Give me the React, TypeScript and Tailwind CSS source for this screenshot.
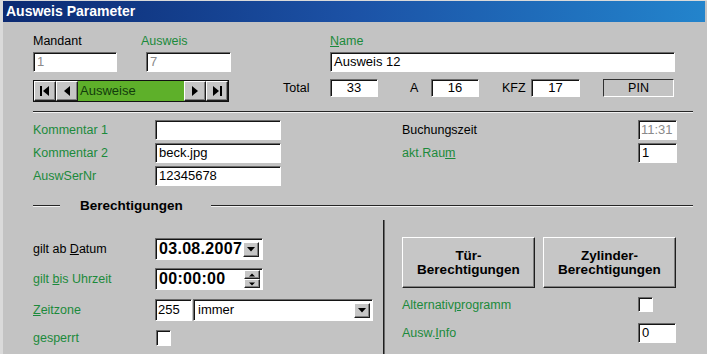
import React from "react";

type BoxProps = { className?: string; children?: React.ReactNode };

// sunken field, classic windows look
const Field = ({ className = "", children }: BoxProps) => (
  <div
    className={`flex items-center border border-t-[#6a6a6a] border-l-[#6a6a6a] border-b-white border-r-white shadow-[inset_1px_1px_0_#141414] ${className}`}
  >
    {children}
  </div>
);

const Raised = ({ className = "", children }: BoxProps) => (
  <div
    className={`flex items-center justify-center border border-t-white border-l-white border-b-[#1e1e1e] border-r-[#1e1e1e] shadow-[inset_-1px_-1px_0_#808080] bg-[#c6c6c6] ${className}`}
  >
    {children}
  </div>
);

const Label = ({ className = "", children }: BoxProps) => (
  <div className={`text-[12.5px] leading-[14px] ${className}`}>{children}</div>
);

const Green = "text-[#1b8a3b]";

const NavIcon = ({ kind }: { kind: "first" | "prev" | "next" | "last" }) => (
  <svg width="12" height="12" viewBox="0 0 12 12">
    {kind === "first" && (
      <>
        <rect x="1" y="1" width="2" height="10" fill="#000" />
        <polygon points="10,1 10,11 4,6" fill="#000" />
      </>
    )}
    {kind === "prev" && <polygon points="9,1 9,11 3,6" fill="#000" />}
    {kind === "next" && <polygon points="3,1 3,11 9,6" fill="#000" />}
    {kind === "last" && (
      <>
        <polygon points="2,1 2,11 8,6" fill="#000" />
        <rect x="9" y="1" width="2" height="10" fill="#000" />
      </>
    )}
  </svg>
);

const DownArrow = () => (
  <svg width="8" height="5" viewBox="0 0 8 5">
    <polygon points="0,0 8,0 4,4.5" fill="#000" />
  </svg>
);

const DropButton = ({ className = "" }: { className?: string }) => (
  <Raised className={`w-[16px] h-[15px] ${className}`}>
    <DownArrow />
  </Raised>
);

const Separator = ({ className = "" }: { className?: string }) => (
  <div className={`h-0 border-t border-t-[#262626] border-b border-b-[#f2f2f2] ${className}`} />
);

const App = () => {
  return (
    <div className="w-[707px] h-[354px] overflow-hidden bg-[#c3c3c3] border-l-[3px] border-l-[#dadada] border-t border-t-[#dadada] font-['Liberation_Sans',Arial,sans-serif] text-black">
      {/* title bar */}
      <div className="h-[21px] mr-[2px] bg-gradient-to-r from-[#0c2a72] via-[#1c52a6] to-[#2384cc] pl-[3px] text-white font-bold text-[14px] leading-[21px]">
        Ausweis Parameter
      </div>

      <div className="pl-[30px]">
        {/* kopf */}
        <div className="flex mt-[12px]">
          <Label className="w-[108px]">Mandant</Label>
          <Label className={`w-[189px] ${Green}`}>Ausweis</Label>
          <Label className={Green}>
            <u>N</u>ame
          </Label>
        </div>
        <div className="flex mt-[4px] h-[20px]">
          <Field className="w-[84px] bg-white pl-[3px] text-[13px] text-[#8a8a8a]">1</Field>
          <Field className="w-[85px] ml-[29px] bg-white pl-[3px] text-[13px] text-[#8a8a8a]">7</Field>
          <Field className="w-[345px] ml-[99px] bg-white pl-[3px] text-[13px]">Ausweis 12</Field>
        </div>

        <div className="flex items-start mt-[7px]">
          <div className="mt-[1px] w-[196px] h-[22px] flex border border-[#111] bg-[#111]">
            <Raised className="w-[22px] h-full">
              <NavIcon kind="first" />
            </Raised>
            <Raised className="w-[22px] h-full">
              <NavIcon kind="prev" />
            </Raised>
            <div className="flex-1 bg-[#5eb02a] text-[#123c0c] text-[13px] leading-[20px] pl-[2px]">Ausweise</div>
            <Raised className="w-[22px] h-full">
              <NavIcon kind="next" />
            </Raised>
            <Raised className="w-[22px] h-full">
              <NavIcon kind="last" />
            </Raised>
          </div>
          <Label className="ml-[54px] w-[47px] leading-[18px]">Total</Label>
          <Field className="w-[48px] h-[18px] bg-white justify-center text-[13px]">33</Field>
          <Label className="ml-[32px] w-[21px] leading-[18px]">A</Label>
          <Field className="w-[48px] h-[18px] bg-white justify-center text-[13px]">16</Field>
          <Label className="ml-[23px] w-[29px] leading-[18px]">KFZ</Label>
          <Field className="w-[49px] h-[18px] bg-white justify-center text-[13px]">17</Field>
          <Field className="w-[71px] h-[18px] ml-[23px] bg-[#c3c3c3] justify-center text-[12.5px] shadow-none border-t-[#303030] border-l-[#303030]">
            PIN
          </Field>
        </div>

        <Separator className="mt-[9px] w-[660px]" />

        {/* kommentare */}
        <div className="flex flex-col gap-[3px] mt-[7px]">
          <div className="flex items-center h-[20px]">
            <Label className={`w-[122px] ${Green}`}>Kommentar 1</Label>
            <Field className="w-[126px] h-full bg-white" />
            <Label className="ml-[121px] w-[236px]">Buchungszeit</Label>
            <Field className="w-[39px] h-full bg-white pl-[2px] text-[13px] text-[#8a8a8a]">11:31</Field>
          </div>
          <div className="flex items-center h-[20px]">
            <Label className={`w-[122px] ${Green}`}>Kommentar 2</Label>
            <Field className="w-[126px] h-full bg-white pl-[3px] text-[13px]">beck.jpg</Field>
            <Label className={`ml-[121px] w-[236px] ${Green}`}>
              akt.Rau<u>m</u>
            </Label>
            <Field className="w-[39px] h-full bg-white pl-[3px] text-[13px]">1</Field>
          </div>
          <div className="flex items-center h-[20px]">
            <Label className={`w-[122px] ${Green}`}>AuswSerNr</Label>
            <Field className="w-[126px] h-full bg-white pl-[3px] text-[13px]">12345678</Field>
          </div>
        </div>

        {/* berechtigungen */}
        <div className="flex items-center mt-[12px] h-[16px] w-[660px]">
          <Separator className="w-[27px]" />
          <div className="ml-[20px] font-bold text-[13.5px]">Berechtigungen</div>
          <Separator className="ml-[28px] flex-1" />
        </div>
      </div>

      <div className="flex mt-[6px] h-[140px]">
        <div className="w-[380px] pl-[30px] pt-[18px]">
          <div className="flex items-center h-[22px]">
            <Label className="w-[122px]">
              gilt ab <u>D</u>atum
            </Label>
            <Field className="w-[108px] h-full bg-white pl-[3px] pr-[3px] justify-between">
              <span className="font-bold text-[16px] tracking-[0.3px]">03.08.2007</span>
              <DropButton />
            </Field>
          </div>
          <div className="flex items-center h-[22px] mt-[8px]">
            <Label className={`w-[122px] ${Green}`}>
              gilt <u>b</u>is Uhrzeit
            </Label>
            <Field className="w-[108px] h-full bg-white pl-[3px] pr-[2px] justify-between">
              <span className="font-bold text-[16px] tracking-[0.3px]">00:00:00</span>
              <div className="flex flex-col">
                <Raised className="w-[16px] h-[9px]">
                  <svg width="6" height="4" viewBox="0 0 6 4">
                    <polygon points="0,3.5 6,3.5 3,0.5" fill="#000" />
                  </svg>
                </Raised>
                <Raised className="w-[16px] h-[9px]">
                  <svg width="6" height="4" viewBox="0 0 6 4">
                    <polygon points="0,0.5 6,0.5 3,3.5" fill="#000" />
                  </svg>
                </Raised>
              </div>
            </Field>
          </div>
          <div className="flex items-center h-[22px] mt-[9px]">
            <Label className={`w-[122px] ${Green}`}>
              <u>Z</u>eitzone
            </Label>
            <Field className="w-[37px] h-full bg-white pl-[2px] text-[13px]">255</Field>
            <Field className="w-[180px] ml-[1px] h-full bg-white pl-[4px] pr-[2px] justify-between text-[13px]">
              <span>immer</span>
              <DropButton />
            </Field>
          </div>
          <div className="flex items-center h-[16px] mt-[9px]">
            <Label className={`w-[123px] ${Green}`}>gesperrt</Label>
            <Field className="w-[15px] h-[16px] bg-white" />
          </div>
        </div>

        <div className="w-[2px] border-l border-l-[#1e1e1e] border-r border-r-[#6a6a6a]" />

        <div className="pl-[17px] pt-[17px]">
          <div className="flex gap-[8px]">
            <Raised className="w-[133px] h-[51px] flex-col font-bold text-[13.5px] leading-[14px] pt-[1px]">
              <span>Tür-</span>
              <span>Berechtigungen</span>
            </Raised>
            <Raised className="w-[133px] h-[51px] flex-col font-bold text-[13.5px] leading-[14px] pt-[1px]">
              <span>Zylinder-</span>
              <span>Berechtigungen</span>
            </Raised>
          </div>
          <div className="flex items-center h-[15px] mt-[9px]">
            <Label className={`w-[236px] ${Green}`}>
              Alternativ<u>p</u>rogramm
            </Label>
            <Field className="w-[15px] h-[15px] bg-white" />
          </div>
          <div className="flex items-center h-[20px] mt-[11px]">
            <Label className={`w-[236px] ${Green}`}>
              Ausw.<u>I</u>nfo
            </Label>
            <Field className="w-[38px] h-full bg-white pl-[3px] text-[13px]">0</Field>
          </div>
        </div>
      </div>
    </div>
  );
};

export default App;
